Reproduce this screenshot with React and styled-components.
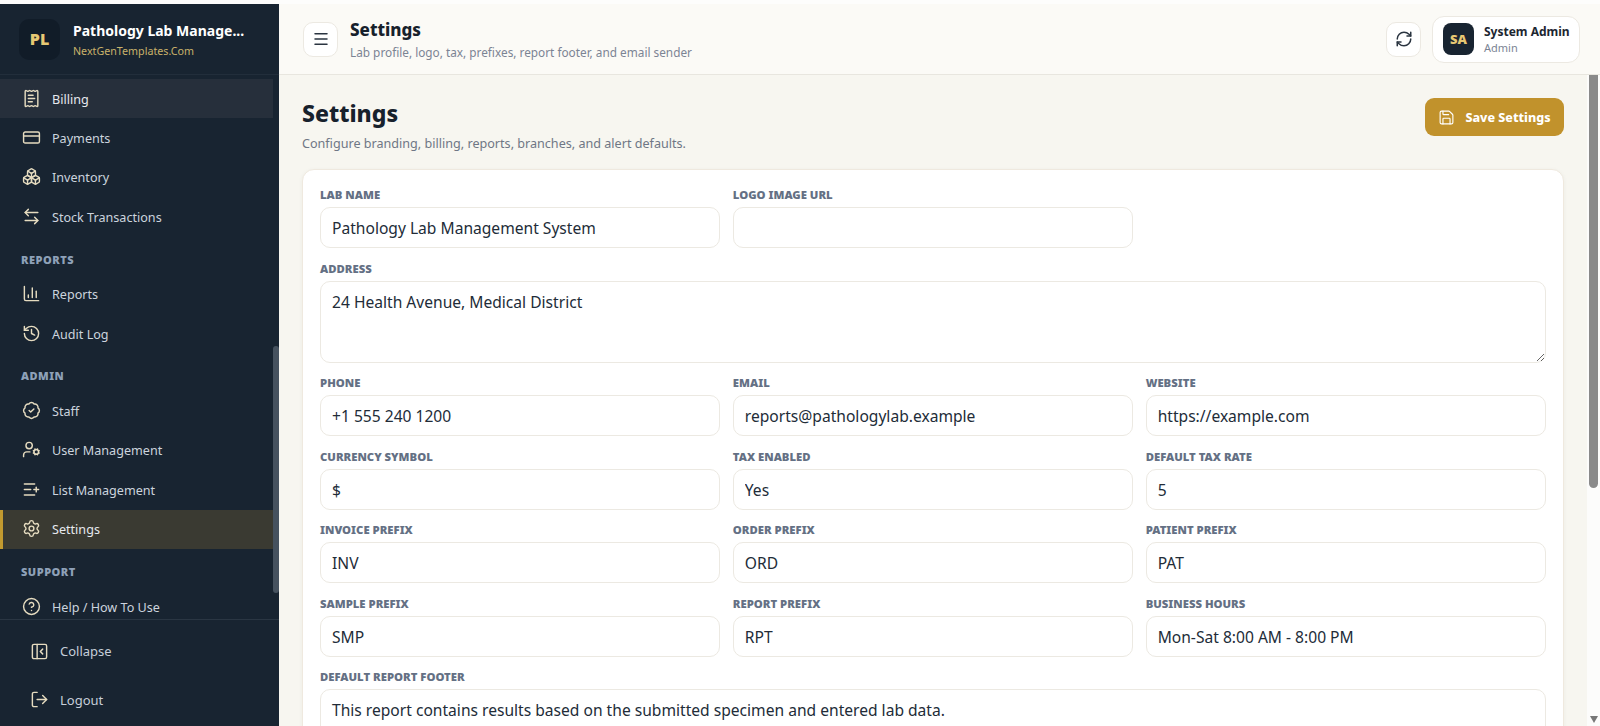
import styled, { createGlobalStyle } from "styled-components";
import {
  ArrowLeftRight, BadgeCheck, Boxes, ChartColumn, CircleHelp, CreditCard, History,
  ListPlus, LogOut, Menu, PanelLeftClose, ReceiptText, RefreshCw, Save, Settings, UserCog,
} from "lucide-react";

const GlobalStyle = createGlobalStyle`
  html, body {
    margin: 0;
    height: 100%;
    overflow: hidden;
    background: #fdfdfc;
    font-family: "Noto Sans", "Liberation Sans", sans-serif;
  }
  * { box-sizing: border-box; }
`;

const Shell = styled.div`
  display: flex;
  height: 100vh;
  padding-top: 4px;
`;

const Sidebar = styled.aside`
  display: flex;
  flex-direction: column;
  flex: 0 0 279px;
  min-height: 0;
  background: #182431;
`;

const Brand = styled.div`
  display: flex;
  align-items: center;
  flex: 0 0 71px;
  gap: 13px;
  padding: 0 19px;
  border-bottom: 1px solid #222e3b;
`;

const LogoMark = styled.div`
  display: flex;
  align-items: center;
  justify-content: center;
  width: 41px;
  height: 41px;
  border-radius: 10px;
  background: #111c28;
  color: #e7c873;
  font-size: 16px;
  font-weight: 900;
`;

const BrandText = styled.div`
  margin-top: 2px;
`;

const BrandName = styled.div`
  color: #fff;
  font-size: 14px;
  font-weight: 700;
  line-height: 20px;
`;

const BrandSub = styled.div`
  margin-top: 2px;
  color: #c9b26a;
  font-size: 10.7px;
  line-height: 17px;
`;

const NavArea = styled.div`
  display: flex;
  flex: 1;
  min-height: 0;
  overflow: hidden;
`;

const NavList = styled.nav`
  flex: 1;
  padding-top: 4px;
`;

const NavRail = styled.div`
  flex: 0 0 6px;
`;

const NavThumb = styled.div`
  width: 6px;
  height: 247px;
  margin-top: 271px;
  border-radius: 3px;
  background: #46525f;
`;

const NavRow = styled.div`
  display: flex;
  align-items: center;
  height: 39.4px;
  gap: 11px;
  padding-left: ${(p) => (p.$active ? "19px" : "22px")};
  border-left: ${(p) => (p.$active ? "3px solid #c39a2f" : "none")};
  background: ${(p) => (p.$active ? "#3a3a32" : p.$hover ? "#262f3b" : "transparent")};
  color: ${(p) => (p.$active || p.$hover ? "#e6e9ee" : "#ccd4de")};
  font-size: 12.6px;
  & svg {
    flex: none;
    width: 19px;
    height: 19px;
    margin-top: -1px;
    color: #e6dcc0;
  }
`;

const NavText = styled.span`
  margin-top: 1px;
`;

const SectionLabel = styled.div`
  height: 38px;
  padding: 14px 0 0 21px;
  color: #8ea1b8;
  font-size: 11px;
  font-weight: 900;
  line-height: 18px;
  letter-spacing: 0.5px;
`;

const SideFooter = styled.div`
  flex: 0 0 107px;
  padding-top: 7px;
  border-top: 1px solid #2a3643;
`;

const FooterRow = styled.div`
  display: flex;
  align-items: center;
  height: 48.5px;
  gap: 11px;
  padding-left: 30px;
  color: #c6ced9;
  font-size: 13px;
  & svg {
    width: 19px;
    height: 19px;
    color: #e6dcc0;
  }
`;

const Main = styled.div`
  display: flex;
  flex-direction: column;
  flex: 1;
  min-width: 0;
`;

const TopBar = styled.header`
  display: flex;
  align-items: center;
  flex: 0 0 71px;
  gap: 12px;
  padding: 0 20px 0 24px;
  background: #fbfaf6;
  border-bottom: 1px solid #e8e6df;
`;

const IconButton = styled.button`
  display: flex;
  align-items: center;
  justify-content: center;
  width: 35px;
  height: 35px;
  padding: 0;
  border: 1px solid #ece9e2;
  border-radius: 10px;
  background: #fff;
  color: #2a3440;
  & svg {
    width: 18px;
    height: 18px;
  }
`;

const TitleBlock = styled.div`
  flex: 1;
  margin-top: -2px;
`;

const TopTitle = styled.div`
  padding-top: 1px;
  color: #17212c;
  font-size: 17px;
  font-weight: 800;
  line-height: 26px;
`;

const TopSub = styled.div`
  color: #7b8494;
  font-size: 11.8px;
  line-height: 18px;
`;

const UserChip = styled.div`
  display: flex;
  align-items: center;
  width: 148px;
  height: 47px;
  gap: 10px;
  margin-left: -1px;
  padding-left: 10px;
  border: 1px solid #ece9e2;
  border-radius: 12px;
  background: #fff;
`;

const Avatar = styled.div`
  display: flex;
  align-items: center;
  justify-content: center;
  width: 31px;
  height: 32px;
  border-radius: 8px;
  background: #182431;
  color: #e7c873;
  font-size: 13px;
  font-weight: 900;
`;

const UserName = styled.div`
  color: #1c2631;
  font-size: 12px;
  font-weight: 700;
  line-height: 16px;
`;

const UserRole = styled.div`
  color: #7b8494;
  font-size: 11px;
  line-height: 15px;
`;

const Body = styled.div`
  display: flex;
  flex: 1;
  min-height: 0;
`;

const Content = styled.main`
  flex: 1;
  min-width: 0;
  padding: 23px 23px 0;
  overflow: hidden;
  background: #f7f6f0;
`;

const PageHead = styled.div`
  display: flex;
  justify-content: space-between;
  align-items: flex-start;
  height: 71px;
`;

const PageTitle = styled.h1`
  margin: -1px 0 0;
  color: #17212c;
  font-size: 23px;
  font-weight: 800;
  line-height: 32px;
`;

const PageSub = styled.p`
  margin: 6px 0 0;
  color: #6f7785;
  font-size: 12.6px;
  line-height: 18px;
`;

const SaveButton = styled.button`
  display: flex;
  align-items: center;
  justify-content: center;
  width: 139px;
  height: 38px;
  gap: 10px;
  border: none;
  border-radius: 9px;
  background: #c1922c;
  color: #fff;
  font-family: inherit;
  font-size: 12.5px;
  font-weight: 800;
  & svg {
    width: 17px;
    height: 17px;
    stroke-width: 1.6;
  }
`;

const Card = styled.section`
  display: grid;
  grid-template-columns: repeat(3, 1fr);
  column-gap: 12.5px;
  row-gap: 11.5px;
  padding: 16px 17px;
  border: 1px solid #efe9df;
  border-radius: 12px;
  background: #fff;
  box-shadow: 0 1px 4px rgba(60, 50, 30, 0.05);
`;

const Field = styled.label`
  display: flex;
  flex-direction: column;
  gap: 3px;
  grid-column: ${(p) => (p.$wide ? "1 / -1" : "auto")};
`;

const FieldLabel = styled.span`
  color: #647084;
  font-size: 11.3px;
  font-weight: 900;
  line-height: 18px;
  text-transform: uppercase;
`;

const TextInput = styled.input`
  width: 100%;
  height: 41px;
  padding: 1px 11px 0;
  border: 1px solid #ece9e2;
  border-radius: 10px;
  background: #fff;
  color: #222c38;
  font-family: inherit;
  font-size: 15.6px;
  outline: none;
`;

const TextArea = styled.textarea`
  display: block;
  width: 100%;
  height: 82px;
  padding: 7px 11px;
  border: 1px solid #ece9e2;
  border-radius: 10px;
  background: #fff;
  color: #222c38;
  font-family: inherit;
  font-size: 15.6px;
  line-height: 26px;
  outline: none;
`;

const PageRail = styled.div`
  display: flex;
  flex-direction: column;
  justify-content: space-between;
  align-items: center;
  flex: 0 0 13px;
  padding-bottom: 3px;
  background: #fcfcfb;
`;

const PageThumb = styled.div`
  width: 9px;
  height: 413px;
  border-radius: 0 0 5px 5px;
  background: #8a8a8a;
`;

const DownArrow = styled.div`
  width: 0;
  height: 0;
  border-left: 4.5px solid transparent;
  border-right: 4.5px solid transparent;
  border-top: 7px solid #777;
`;

const navGroups = [
  {
    items: [
      { icon: ReceiptText, label: "Billing", hover: true },
      { icon: CreditCard, label: "Payments" },
      { icon: Boxes, label: "Inventory" },
      { icon: ArrowLeftRight, label: "Stock Transactions" },
    ],
  },
  {
    title: "REPORTS",
    items: [
      { icon: ChartColumn, label: "Reports" },
      { icon: History, label: "Audit Log" },
    ],
  },
  {
    title: "ADMIN",
    items: [
      { icon: BadgeCheck, label: "Staff" },
      { icon: UserCog, label: "User Management" },
      { icon: ListPlus, label: "List Management" },
      { icon: Settings, label: "Settings", active: true },
    ],
  },
  {
    title: "SUPPORT",
    items: [{ icon: CircleHelp, label: "Help / How To Use" }],
  },
];

const fields = [
  { label: "Lab Name", value: "Pathology Lab Management System" },
  { label: "Logo Image URL", value: "" },
  { label: "Address", value: "24 Health Avenue, Medical District", area: true },
  { label: "Phone", value: "+1 555 240 1200" },
  { label: "Email", value: "reports@pathologylab.example" },
  { label: "Website", value: "https://example.com" },
  { label: "Currency Symbol", value: "$" },
  { label: "Tax Enabled", value: "Yes" },
  { label: "Default Tax Rate", value: "5" },
  { label: "Invoice Prefix", value: "INV" },
  { label: "Order Prefix", value: "ORD" },
  { label: "Patient Prefix", value: "PAT" },
  { label: "Sample Prefix", value: "SMP" },
  { label: "Report Prefix", value: "RPT" },
  { label: "Business Hours", value: "Mon-Sat 8:00 AM - 8:00 PM" },
  {
    label: "Default Report Footer",
    value: "This report contains results based on the submitted specimen and entered lab data.",
    area: true,
  },
];

const App = () => (
  <>
    <GlobalStyle />
    <Shell>
      <Sidebar>
        <Brand>
          <LogoMark>PL</LogoMark>
          <BrandText>
            <BrandName>Pathology Lab Manage...</BrandName>
            <BrandSub>NextGenTemplates.Com</BrandSub>
          </BrandText>
        </Brand>
        <NavArea>
          <NavList>
            {navGroups.map((group, i) => (
              <div key={i}>
                {group.title && <SectionLabel>{group.title}</SectionLabel>}
                {group.items.map(({ icon: Icon, label, active, hover }) => (
                  <NavRow key={label} $active={active} $hover={hover}>
                    <Icon strokeWidth={1.8} />
                    <NavText>{label}</NavText>
                  </NavRow>
                ))}
              </div>
            ))}
          </NavList>
          <NavRail>
            <NavThumb />
          </NavRail>
        </NavArea>
        <SideFooter>
          <FooterRow>
            <PanelLeftClose strokeWidth={1.8} />
            Collapse
          </FooterRow>
          <FooterRow>
            <LogOut strokeWidth={1.8} />
            Logout
          </FooterRow>
        </SideFooter>
      </Sidebar>
      <Main>
        <TopBar>
          <IconButton>
            <Menu />
          </IconButton>
          <TitleBlock>
            <TopTitle>Settings</TopTitle>
            <TopSub>Lab profile, logo, tax, prefixes, report footer, and email sender</TopSub>
          </TitleBlock>
          <IconButton>
            <RefreshCw />
          </IconButton>
          <UserChip>
            <Avatar>SA</Avatar>
            <div>
              <UserName>System Admin</UserName>
              <UserRole>Admin</UserRole>
            </div>
          </UserChip>
        </TopBar>
        <Body>
          <Content>
            <PageHead>
              <div>
                <PageTitle>Settings</PageTitle>
                <PageSub>Configure branding, billing, reports, branches, and alert defaults.</PageSub>
              </div>
              <SaveButton>
                <Save />
                Save Settings
              </SaveButton>
            </PageHead>
            <Card>
              {fields.map((f) => (
                <Field key={f.label} $wide={f.area}>
                  <FieldLabel>{f.label}</FieldLabel>
                  {f.area ? <TextArea readOnly value={f.value} /> : <TextInput readOnly value={f.value} />}
                </Field>
              ))}
            </Card>
          </Content>
          <PageRail>
            <PageThumb />
            <DownArrow />
          </PageRail>
        </Body>
      </Main>
    </Shell>
  </>
);

export default App;
